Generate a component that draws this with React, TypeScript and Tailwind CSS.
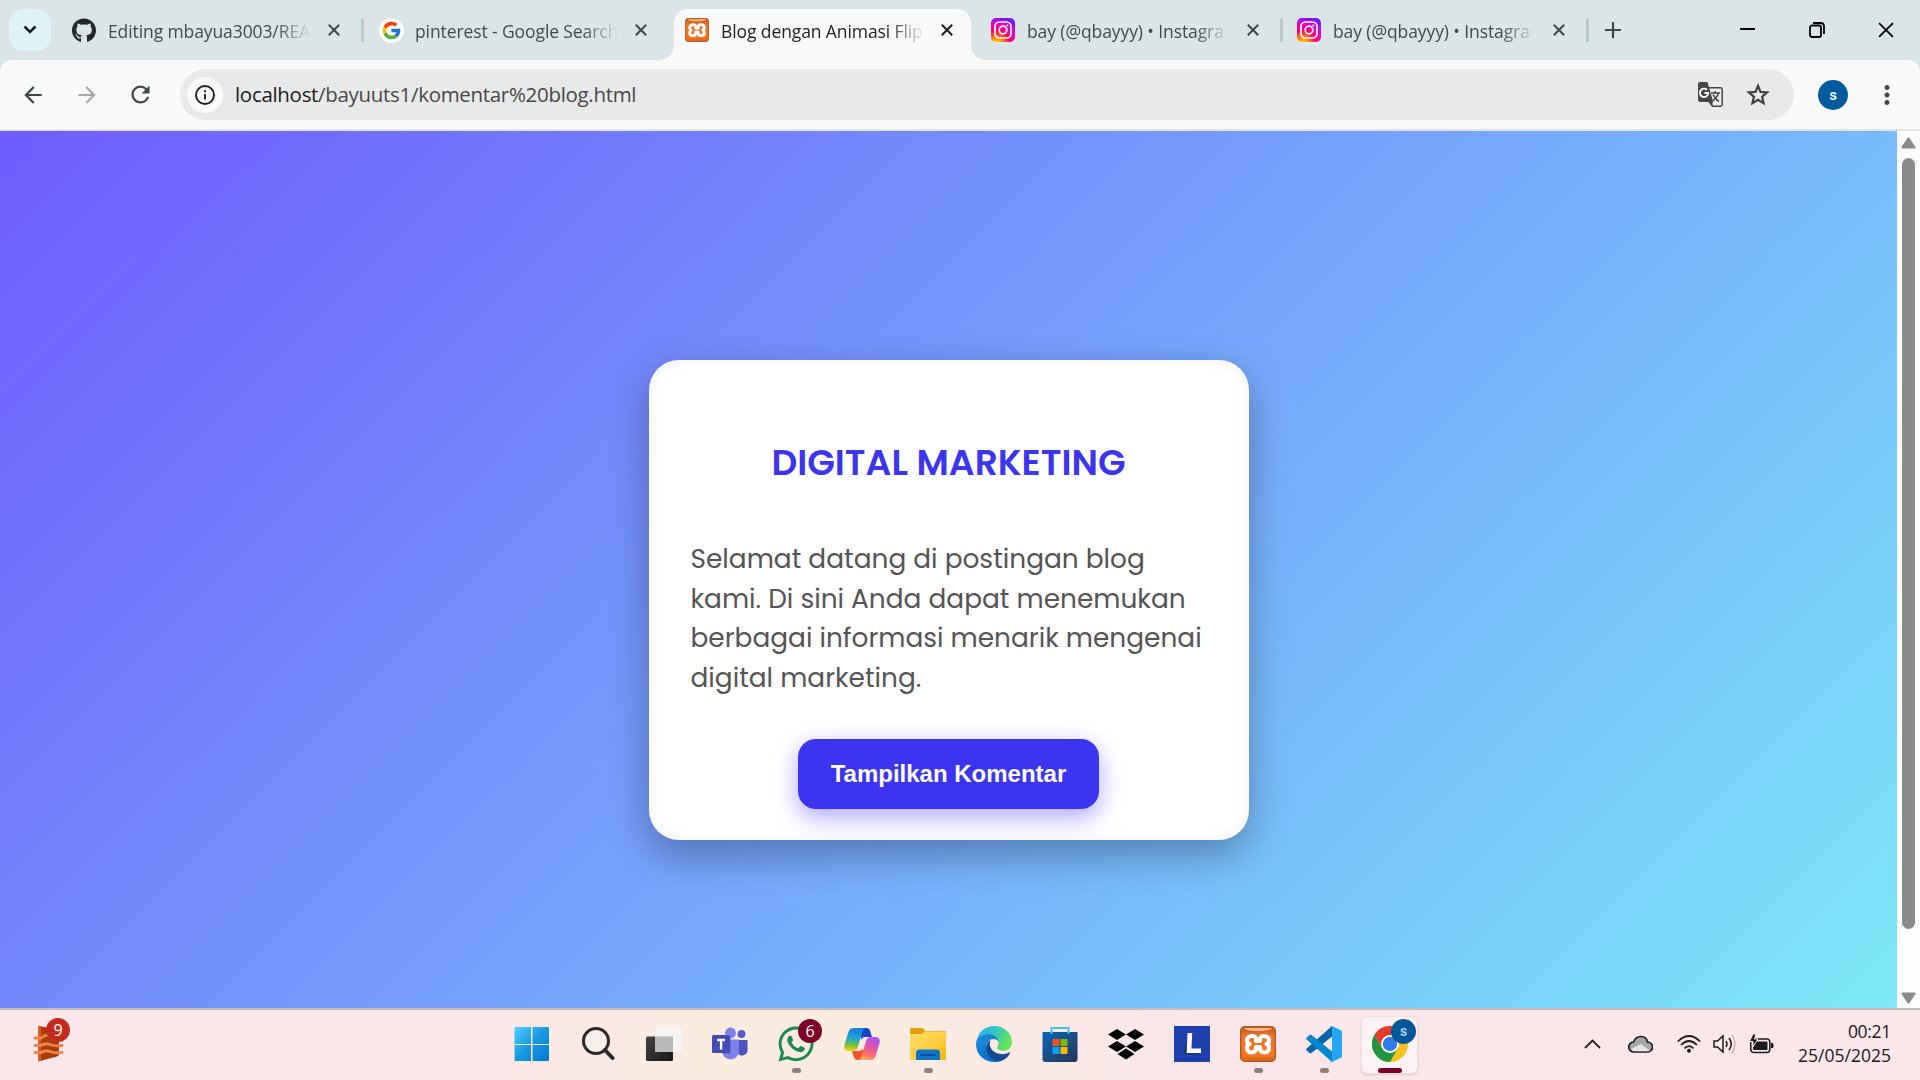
import React from "react";
import { FaGithub, FaWhatsapp } from "react-icons/fa";
import { FcGoogle } from "react-icons/fc";
import { MdArrowBack, MdArrowForward, MdRefresh, MdMoreVert } from "react-icons/md";

const Cross = ({ s = 12, w = 2 }: { s?: number; w?: number }) => (
  <svg width={s} height={s} viewBox="0 0 12 12" fill="none" stroke="currentColor" strokeWidth={w}>
    <path d="M.8.8l10.4 10.4M11.2.8L.8 11.2" />
  </svg>
);

const Xampp = ({ s }: { s: number }) => (
  <svg width={s} height={s} viewBox="0 0 36 36">
    <defs>
      <linearGradient id="xa" x1="0" y1="0" x2="0" y2="1">
        <stop offset="0" stopColor="#b9551b" />
        <stop offset=".25" stopColor="#e8762c" />
        <stop offset=".8" stopColor="#f57622" />
        <stop offset="1" stopColor="#d9641a" />
      </linearGradient>
    </defs>
    <rect x=".7" y=".7" width="34.6" height="34.6" rx="4" fill="url(#xa)" stroke="#b5581f" strokeWidth="1.4" />
    <path d="M4 2h28q-1 3-14 3T4 2z" fill="#f5b68b" />
    <path
      d="M12.5 10c-3.500 0-5.500 2-5.500 4.500 0 2 1 3 2.500 3.500-1.800.6-2.500 2-2.500 3.700 0 3 2 4.800 4.900 4.800 2.700 0 4.200-2 4.200-4.500V21h3.800v1c0 2.500 1.500 4.500 4.200 4.500 2.900 0 4.900-1.800 4.900-4.800 0-1.700-.7-3.100-2.500-3.700 1.500-.5 2.500-1.500 2.500-3.500 0-2.500-2-4.500-5.500-4.500-2 0-3.600 1.500-3.600 3.500V15h-3.800v-1.500c0-2-1.600-3.500-3.600-3.500z"
      fill="none"
      stroke="#fff"
      strokeWidth="4.200"
      strokeLinejoin="round"
    />
  </svg>
);

const Insta = () => (
  <svg width="24" height="24" viewBox="0 0 24 24">
    <defs>
      <radialGradient id="ig" cx=".25" cy="1.050" r="1.050">
        <stop offset="0" stopColor="#ffd600" />
        <stop offset=".2" stopColor="#ff9a00" />
        <stop offset=".5" stopColor="#ff0169" />
        <stop offset=".8" stopColor="#e800d0" />
        <stop offset="1" stopColor="#7a18ff" />
      </radialGradient>
    </defs>
    <rect width="24" height="24" rx="5" fill="url(#ig)" />
    <rect x="4" y="4" width="16" height="16" rx="4.500" fill="none" stroke="#fff" strokeWidth="1.700" />
    <circle cx="12" cy="12" r="3.800" fill="none" stroke="#fff" strokeWidth="1.700" />
    <circle cx="16.400" cy="7.600" r="1" fill="#fff" />
  </svg>
);

function Tab({ icon, title, active, width, divider }: { icon: React.ReactNode; title: string; active?: boolean; width: string; divider?: boolean }) {
  return (
    <div className={`relative flex h-full shrink-0 items-start ${width}`}>
      {active && (
        <>
          <div className="absolute -left-[11px] top-[9px] h-[51px] w-[297px] rounded-t-[14px] bg-[#f9f9f9]" />
          <div className="absolute -left-[25px] bottom-0 size-[14px] bg-[radial-gradient(circle_at_0_0,transparent_13.5px,#f9f9f9_14px)]" />
          <div className="absolute left-[286px] bottom-0 size-[14px] bg-[radial-gradient(circle_at_100%_0,transparent_13.5px,#f9f9f9_14px)]" />
        </>
      )}
      <div className="relative mt-[18px] flex size-6 items-center justify-center">{icon}</div>
      <div
        className={`relative ml-[12px] mt-[18px] w-[204px] whitespace-nowrap text-[17.5px] leading-[27px] tracking-[-0.1px] [mask-image:linear-gradient(90deg,#000_168px,transparent_203px)] ${active ? "text-[#1d2020]" : "text-[#434a4b]"}`}
      >
        {title}
      </div>
      <div className={`relative ml-[16px] mt-6 ${active ? "text-[#1d2020]" : "text-[#3f4748]"}`}>
        <Cross />
      </div>
      {divider && <div className="ml-[21px] mt-[18px] h-6 w-[3px] rounded bg-[#b7cacd]" />}
    </div>
  );
}

const Translate = () => (
  <svg className="ml-auto" width="25" height="25" viewBox="0 0 25 25">
    <path d="M10 5.700h12.500q1.700 0 1.700 1.700V22.500q0 1.700-1.700 1.700H14.500l-2-5" fill="#e8eae9" stroke="#474747" strokeWidth="1.500" />
    <path d="M13 11h9M17.300 9v2M20.500 11q-1.500 5-6 8M15 12.500q2 4.500 6 7" fill="none" stroke="#474747" strokeWidth="1.500" />
    <path d="M2 0h7.500l5.500 19.500 -1.500 5L10.500 20H2Q0 20 0 18V2Q0 0 2 0z" fill="#474747" />
    <path d="M9 7.800A4.200 4.200 0 1 0 10.300 11H6.500" fill="none" stroke="#fff" strokeWidth="1.900" />
  </svg>
);

const Star = () => (
  <svg className="ml-[23px] mr-[24px]" width="24" height="23" viewBox="0 0 24 23" fill="none" stroke="#3f4242" strokeWidth="2.200">
    <path d="M12 2.800l2.500 6.100 6.600.5-5 4.300 1.500 6.400L12 16.700l-5.600 3.400 1.500-6.400-5-4.300 6.600-.5z" />
  </svg>
);

const Teams = () => (
  <svg width="36" height="34" viewBox="0 0 36 34">
    <circle cx="29.500" cy="7" r="3.900" fill="#5059c9" />
    <path d="M25 13h10.500v9a5.500 5.500 0 0 1-10.500 3z" fill="#4b53bc" />
    <circle cx="18.500" cy="6" r="5.400" fill="#7b83eb" />
    <path d="M10 12.500h17V24a8.500 8.500 0 0 1-17 0z" fill="#7b83eb" />
    <path d="M10 12.500h9V25q0 2-2 2h-5.500Q10 26 10 24z" fill="#5b62c8" opacity=".6" />
    <rect y="8" width="18" height="18" rx="1.500" fill="#454db3" />
    <path d="M5.200 13h7.800M9.100 13v9.500" stroke="#fff" strokeWidth="2.300" />
  </svg>
);

const Copilot = () => (
  <svg width="36" height="34" viewBox="0 0 36 34">
    <defs>
      <linearGradient id="c1" x1=".4" y1="0" x2=".3" y2="1">
        <stop offset=".1" stopColor="#1683e4" />
        <stop offset=".45" stopColor="#20a6c9" />
        <stop offset=".72" stopColor="#6bbd4a" />
        <stop offset="1" stopColor="#ffd000" />
      </linearGradient>
      <linearGradient id="c2" x1=".7" y1="0" x2=".3" y2="1">
        <stop offset="0" stopColor="#a45af4" />
        <stop offset=".4" stopColor="#e352ad" />
        <stop offset=".75" stopColor="#ff7065" />
        <stop offset="1" stopColor="#ffb05a" />
      </linearGradient>
    </defs>
    <path d="M16 1h6c3 0 4 2 4.600 4.500L28 10h-7c-2 0-3 1-3.600 3z" fill="#1643c5" />
    <path d="M20 33h-6c-3 0-4-2-4.600-4.500L8 24h7c2 0 3-1 3.600-3z" fill="#f4512c" />
    <path d="M10 1h12c-2 0-3 2-3.600 4l-4.500 15c-.8 2.700-2 4-5 4H4.500C1 24-.5 21.500.4 18L4.300 5.500C5.300 2.300 7 1 10 1z" fill="url(#c1)" />
    <path d="M26 33H14c2 0 3-2 3.600-4l4.500-15c.8-2.700 2-4 5-4h4.400c3.500 0 5 2.500 4.100 6l-3.900 12.500C30.700 31.700 29 33 26 33z" fill="url(#c2)" />
  </svg>
);

const Edge = () => (
  <svg width="36" height="36" viewBox="0 0 256 256">
    <defs>
      <linearGradient id="e1" x1="0" y1="0" x2="1" y2=".4">
        <stop offset="0" stopColor="#2ba9ea" />
        <stop offset=".5" stopColor="#32c3cb" />
        <stop offset="1" stopColor="#65e657" />
      </linearGradient>
      <linearGradient id="e2" x1="0" y1="0" x2=".5" y2="1">
        <stop offset="0" stopColor="#1b8fdc" />
        <stop offset="1" stopColor="#0c6cca" />
      </linearGradient>
    </defs>
    <path d="M2 116C12 44 65 0 130 0c74 0 126 56 126 114 0 40-28 62-60 62-25 0-46-10-46-20 0-7 10-14 10-34 0-24-20-46-54-46-52 0-92 24-104 40z" fill="url(#e1)" />
    <path d="M0 130c0-36 38-71 88-71 40 0 70 24 72 54-8-15-24-20-37-20-35 0-58 35-48 79 9 44 50 76 95 76-15 6-30 8-42 8C56 256 0 200 0 130z" fill="url(#e2)" />
    <path d="M100 97c-18 17-29 38-29 62 0 50 44 93 93 93 34-6 60-27 77-57 3-6-1-9-7-6-15 8-30 11-48 11-53 0-88-35-88-70 0-13 4-22 2-33z" fill="#114b94" />
  </svg>
);

const Store = () => (
  <svg width="36" height="36" viewBox="0 0 36 36">
    <defs>
      <linearGradient id="st" x1="0" y1="0" x2="1" y2="1">
        <stop offset="0" stopColor="#0868b6" />
        <stop offset="1" stopColor="#293458" />
      </linearGradient>
    </defs>
    <path d="M.5 6h35v27q0 3-3 3h-29q-3 0-3-3z" fill="url(#st)" />
    <path d="M9.500 8V2h17v6" fill="none" stroke="#35c4f3" strokeWidth="2" />
    <path d="M10.500 13h7v7h-7z" fill="#f25022" />
    <path d="M18.500 13h7v7h-7z" fill="#7fba00" />
    <path d="M10.500 21h7v7h-7z" fill="#00a4ef" />
    <path d="M18.500 21h7v7h-7z" fill="#ffb900" />
  </svg>
);

const Folder = () => (
  <svg width="36" height="34" viewBox="0 0 36 34">
    <defs>
      <linearGradient id="fo" x1="0" y1="0" x2="1" y2="1">
        <stop offset="0" stopColor="#ffdc6b" />
        <stop offset=".6" stopColor="#ffcc3d" />
        <stop offset="1" stopColor="#f9b40c" />
      </linearGradient>
    </defs>
    <path d="M0 2.500Q0 1 1.500 1H11q1.500 0 2.500 1l2 2H35q1 0 1 1v4H0z" fill="#dfa00b" />
    <path d="M0 7h11q1.500 0 2.500-1l1.500-1.500h20q1 0 1 1V32q0 1-1 1H1q-1 0-1-1z" fill="url(#fo)" />
    <path d="M6 33v-7q0-3.500 3.500-3.500h17Q30 22.500 30 26v7z" fill="#0f74c7" />
    <path d="M11 28h14" stroke="#0c4c93" strokeWidth="1.800" strokeLinecap="round" />
  </svg>
);

const VSCode = () => (
  <svg width="36" height="36" viewBox="0 0 36 36">
    <path d="M26 0v10.500L5.500 27q-1 .8-2 0L.6 24.500q-1-1 0-2z" fill="#0065a9" />
    <path d="M26 36V25.500L5.500 9q-1-.8-2 0L.6 11.500q-1 1 0 2z" fill="#0488cf" />
    <path d="M26 0l9 4.200q1 .5 1 1.600v24.400q0 1.100-1 1.600L26 36q-1 .3-2-.8 1.600.6 2-1V2q-.5-1.800-2-1.200 1-1.200 2-.8z" fill="#26a5f2" />
  </svg>
);

const Chrome = () => (
  <svg width="36" height="36" viewBox="0 0 36 36">
    <circle cx="18" cy="18" r="18" fill="#fcc21b" />
    <path d="M2.400 9l7.800 13.500L18 18V9h15.600A18 18 0 0 0 2.400 9z" fill="#e33b2e" />
    <path d="M2.400 9A18 18 0 0 0 18 36l7.800-13.500L18 18l-7.800 4.500z" fill="#229342" />
    <circle cx="18" cy="18" r="9" fill="#fff" />
    <circle cx="18" cy="18" r="7.200" fill="#2f7de9" />
  </svg>
);

function TaskItem({ children, dot, active }: { children: React.ReactNode; dot?: boolean; active?: boolean }) {
  return (
    <div className="relative flex h-[70px] w-[66px] items-center justify-center">
      {active && <div className="absolute left-[4px] top-[6px] h-[58px] w-[57px] rounded-md border border-[#f1dfe2] bg-[#fdf3f5] shadow-sm" />}
      <div className="relative -top-px flex">{children}</div>
      {dot && <div className="absolute bottom-[7px] left-[29px] h-[5px] w-[9px] rounded-full bg-[#8b8280]" />}
      {active && <div className="absolute bottom-[7px] left-[21px] h-[5px] w-6 rounded-full bg-[#7d0026]" />}
    </div>
  );
}

export default function App() {
  return (
    <div className="flex h-[1080px] w-[1920px] flex-col overflow-hidden bg-[#dbe4e6] font-['Open_Sans',sans-serif]">
      <div className="flex h-[60px] shrink-0">
        <div className="ml-[9px] mr-[21px] mt-[9px] flex size-[42px] items-center justify-center rounded-[14px] bg-[#dff3f8]">
          <svg width="14" height="10" viewBox="0 0 14 10" fill="none" stroke="#171d1e" strokeWidth="2.500"><path d="M1.500 1.500L7 7l5.500-5.500" /></svg>
        </div>
        <Tab width="w-[307px]" icon={<FaGithub size={25} color="#24292f" />} title="Editing mbayua3003/REA" divider />
        <Tab width="w-[306px]" icon={<span className="rounded-full bg-white p-[2px]"><FcGoogle size={21} /></span>} title="pinterest - Google Search" />
        <Tab width="w-[306px]" icon={<Xampp s={24} />} title="Blog dengan Animasi Flip" active />
        <Tab width="w-[306px]" icon={<Insta />} title="bay (@qbayyy) • Instagra" divider />
        <Tab width="w-[306px]" icon={<Insta />} title="bay (@qbayyy) • Instagra" divider />
        <svg className="ml-[2px] mt-[22px]" width="16" height="16" viewBox="0 0 16 16" stroke="#3f4748" strokeWidth="2.200"><path d="M8 0v16M0 8h16" /></svg>
        <div className="ml-auto flex items-center pr-[26px] text-black">
          <div className="mb-[3px] h-[2px] w-[15px] bg-black" />
          <svg className="ml-[54px]" width="16" height="16" viewBox="0 0 16 16" fill="none" stroke="#000" strokeWidth="1.800"><rect x="1" y="3.500" width="11" height="11.500" rx="2" /><path d="M4 1h7.500Q15 1 15 4.500V12" /></svg>
          <div className="ml-[53px]"><Cross s={16} w={1.3} /></div>
        </div>
      </div>

      <div className="flex h-[71px] shrink-0 items-start rounded-t-[12px] border-b-2 border-[#e3e5e5] bg-[#f9f9f9]">
        <div className="flex h-[69px] w-[180px] items-center pl-[20px] text-[#3f4748]">
          <MdArrowBack size={26} />
          <MdArrowForward size={26} className="ml-[28px] text-[#a5a8a8]" />
          <MdRefresh size={27} className="ml-[27px]" />
        </div>
        <div className="mt-[9px] flex h-[51px] w-[1614px] items-center rounded-full bg-[#e8eae9] pl-[7px] text-[#474747]">
          <div className="flex size-9 items-center justify-center rounded-full bg-[#f9f9f9]">
            <svg width="20" height="20" viewBox="0 0 20 20" fill="none" stroke="#1f1f1f" strokeWidth="1.900"><circle cx="10" cy="10" r="9" /><path d="M10 9v5.500M10 5.300v2" /></svg>
          </div>
          <div className="ml-[12px] whitespace-nowrap text-[20.500px] tracking-[-0.31px]"><span className="text-[#1b1b1b]">localhost</span>/bayuuts1/komentar%20blog.html</div>
          <Translate />
          <Star />
        </div>
        <div className="ml-6 mt-5 flex size-[30px] items-center justify-center rounded-full bg-[#005a9e] font-[Roboto,sans-serif] text-[15px] font-medium text-white">s</div>
        <MdMoreVert size={30} className="ml-6 mt-5 text-[#3f4748]" />
      </div>

      <div className="flex h-[877px] shrink-0">
        <main className="flex w-[1897px] justify-center bg-[linear-gradient(135deg,#6e5cff,#7de8f7)] pt-[229px]">
          <article className="flex h-[480px] w-[600px] flex-col items-center rounded-[30px] bg-white px-[42px] shadow-[0_15px_40px_rgba(0,0,0,0.3),inset_0_0_20px_rgba(0,0,0,0.05)]">
            <h1 className="mt-[76px] whitespace-nowrap font-['Poppins',Inter,sans-serif] text-[36px] font-semibold leading-[54px] text-[#3b35ef]">DIGITAL MARKETING</h1>
            <p className="mt-[49px] w-full whitespace-nowrap font-['Poppins',Inter,sans-serif] text-[26.4px] leading-[39.6px] text-[#555]">
              Selamat datang di postingan blog<br />kami. Di sini Anda dapat menemukan<br />berbagai informasi menarik mengenai<br />digital marketing.
            </p>
            <button className="mt-[41.6px] h-[70px] w-[301px] shrink-0 rounded-[18px] bg-[#3b35ef] font-['Liberation_Sans',sans-serif] text-[24px] font-bold text-white shadow-[0_8px_24px_rgba(108,92,255,0.55)]">Tampilkan Komentar</button>
          </article>
        </main>
        <div className="flex w-[23px] flex-col items-center bg-[#fcfcfc] text-[#8b8b8b]">
          <svg className="mt-[6px]" width="15" height="12" viewBox="0 0 15 12" fill="currentColor"><path d="M6.500 1q1-1 2 0L14.500 10q.5 1.500-1 1.500h-12Q0 11.500.5 10z" /></svg>
          <div className="mt-[9px] h-[771px] w-[13px] rounded-full bg-[#8b8b8b]" />
          <svg className="mt-[63px]" width="15" height="12" viewBox="0 0 15 12" fill="currentColor"><path d="M6.500 11q1 1 2 0L14.500 2q.5-1.500-1-1.500h-12Q0 .5.500 2z" /></svg>
        </div>
      </div>

      <div className="flex h-[72px] shrink-0 border-t-2 border-[#c6b8ba] bg-[linear-gradient(90deg,#fce7ea_24%,#faecdf_37%,#faecdf_46%,#fbe7e9_60%,#fce7ea)] text-[#1b1a1a]">
        <div className="relative w-[499px]">
          <svg className="absolute left-[33px] top-[15px]" width="32" height="37" viewBox="0 0 32 37">
            <path d="M5 2q0-1.500 2-1l17 4q2 .5 2 2v22q0 2-2 2.500L7 36q-2 .5-2-1z" fill="#a93b07" />
            <path d="M5 2q0-1.500 3-1v34.500q-3 1-3-.5z" fill="#d95d18" />
            <path d="M2 13h6q5-4 9-2t12 0M2 20.500h6q5-3 9-1t12 1M2 27.500h6q5-3 9-1t12 1" fill="none" stroke="#ee8350" strokeWidth="3" strokeLinecap="round" />
          </svg>
          <div className="absolute left-[46px] top-2 flex size-6 items-center justify-center rounded-full bg-[#c42b1c] text-[16px] text-white">9</div>
        </div>
        <TaskItem>
          <svg width="36" height="36" viewBox="0 0 36 36"><defs><linearGradient id="w" gradientUnits="userSpaceOnUse" x2="36" y2="36"><stop stopColor="#4fd4ff" /><stop offset=".5" stopColor="#1897e0" /><stop offset="1" stopColor="#0078d4" /></linearGradient></defs><path fill="url(#w)" d="M.5 2q0-1 1-1H17v17H.5zM18.500 1H34q1 0 1 1v16H18.500zM.5 19H17v16H1.500q-1 0-1-1zM18.500 19H35v15q0 1-1 1H18.500z" /></svg>
        </TaskItem>
        <TaskItem>
          <svg width="34" height="36" viewBox="0 0 34 36" fill="none" stroke="#292929"><circle cx="15" cy="15" r="12.500" fill="#f7f0f0" fillOpacity=".5" strokeWidth="3" /><path d="M24 24l7.500 8" strokeWidth="4" strokeLinecap="round" /></svg>
        </TaskItem>
        <TaskItem>
          <svg width="36" height="34" viewBox="0 0 36 34"><defs><linearGradient id="tv" x2="1" y2="1"><stop stopColor="#454545" /><stop offset="1" stopColor="#161616" /></linearGradient></defs><rect y="9.500" width="27" height="24.500" rx="1.500" fill="url(#tv)" /><rect x="9" y=".5" width="27" height="24.500" rx="1.500" fill="#f4f4f4" /><path d="M9 9.500h18V25H10.500Q9 25 9 23.500z" fill="#b9b9b9" /></svg>
        </TaskItem>
        <TaskItem><Teams /></TaskItem>
        <TaskItem dot>
          <FaWhatsapp size={40} color="#1a8b55" />
          <div className="absolute -top-[5px] left-[22px] flex size-6 items-center justify-center rounded-full bg-[#7d0026] text-[16px] text-white">6</div>
        </TaskItem>
        <TaskItem><Copilot /></TaskItem>
        <TaskItem dot><Folder /></TaskItem>
        <TaskItem><Edge /></TaskItem>
        <TaskItem><Store /></TaskItem>
        <TaskItem>
          <svg width="36" height="31" viewBox="0 0 36 31"><path d="M9 0l9 5.500-9 5.500L0 5.500zM27 0l9 5.500-9 5.500-9-5.500zM9 12l9 5.500L9 23l-9-5.500zM27 12l9 5.500-9 5.500-9-5.500zM18 19.500l8.500 5.500-8.500 5.500L9.500 25z" /></svg>
        </TaskItem>
        <TaskItem>
          <div className="relative flex size-9 items-center justify-center bg-[#1e40af]"><svg width="36" height="36" viewBox="0 0 36 36"><path d="M14 7l-4 20 7 2 10-2-9-5z" fill="#123e60" /><path d="M13.500 7h4.700l-.7 15.500H27V27H12.700z" fill="#fff" /></svg></div>
        </TaskItem>
        <TaskItem dot><Xampp s={36} /></TaskItem>
        <TaskItem dot><VSCode /></TaskItem>
        <TaskItem active>
          <Chrome />
          <div className="absolute -top-[7px] left-[19px] flex size-[25px] items-center justify-center rounded-full bg-[#07589b] font-[Roboto,sans-serif] text-[14px] font-bold text-[#a9d0ee]">s</div>
        </TaskItem>
        <div className="flex h-[68px] items-center pl-[161px]">
          <svg width="17" height="10" viewBox="0 0 17 10" fill="none" stroke="#222" strokeWidth="1.800"><path d="M1 9l7.500-7.500L16 9" /></svg>
          <svg className="ml-[27px]" width="25" height="18" viewBox="0 0 25 18"><path d="M6 17a5 5 0 0 1-.5-10Q7.500 1.500 13 1.500T19.500 7a5 5 0 0 1 0 10z" fill="#a7a5a5" stroke="#181818" strokeWidth="1.600" /><path d="M3 14l10-5 9 6.500q-1.500 1-3 .8H6q-2 0-3-2.300z" fill="#e6e4e4" /></svg>
          <svg className="ml-[24px]" width="24" height="18" viewBox="0 0 24 18" fill="none" stroke="#1b1b1b" strokeWidth="1.700"><path d="M.8 6.500q11.200-11 22.400 0M4 10q8-8 16 0M7.500 13.300q4.500-4.500 9 0" /><circle cx="12" cy="15.700" r="1.100" fill="#1b1b1b" /></svg>
          <svg className="ml-3" width="24" height="20" viewBox="0 0 24 20" fill="none" stroke="#1b1b1b" strokeWidth="1.500"><path d="M1 7h3.500L10 2v16l-5.500-5H1zM13 7q2 3 0 6M16 4q4.500 6 0 12" /><path d="M19 1q6 9 0 18" stroke="#c5b7b8" /></svg>
          <svg className="ml-3" width="25" height="20" viewBox="0 0 25 20"><rect x="1.800" y="5" width="19" height="13.500" rx="3" fill="none" stroke="#1b1b1b" strokeWidth="1.500" /><rect x="4" y="7.500" width="14.500" height="8.500" rx="1" fill="#1b1b1b" /><path d="M22 9h2q1 2.500 0 5h-2z" fill="#1b1b1b" /><path d="M4 0L.5 7.500H4V13l5-8H5.500L7 0z" fill="#1b1b1b" stroke="#fce7ea" /></svg>
        </div>
        <div className="ml-auto mr-[29px] mt-[9px] text-right text-[17.500px] leading-[24px]"><span className="tracking-[-0.3px]">00:21</span><br />25/05/2025</div>
      </div>
    </div>
  );
}
